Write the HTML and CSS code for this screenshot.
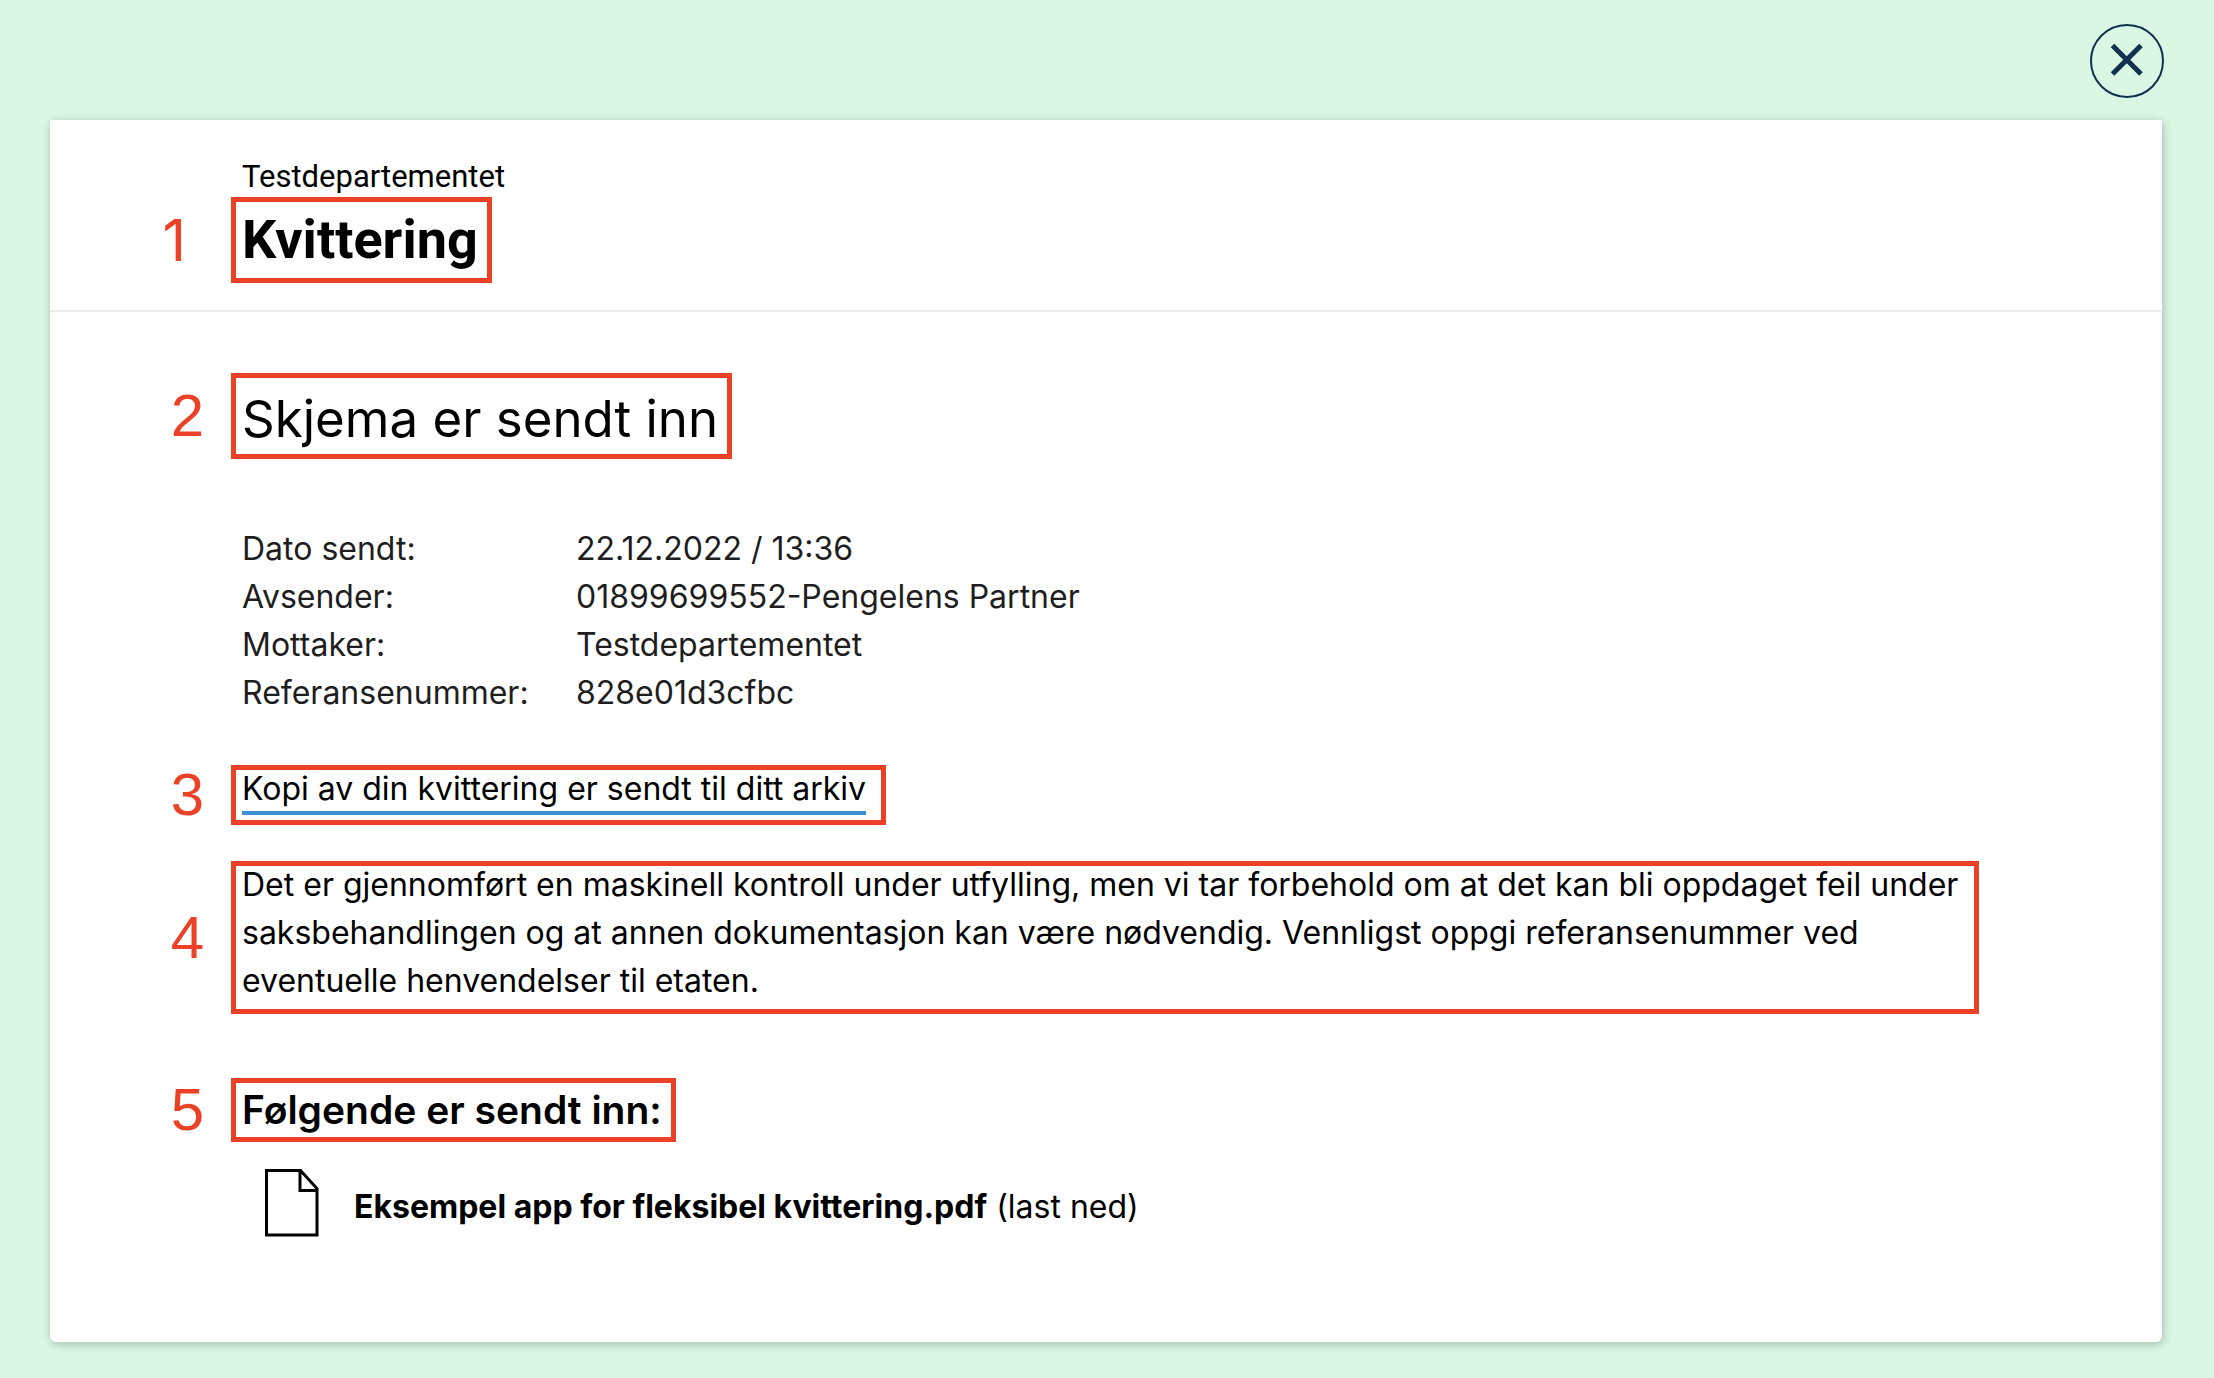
FILE: index.html
```html
<!DOCTYPE html>
<html lang="nb">
<head>
  <meta charset="utf-8">
  <meta name="viewport" content="width=device-width, initial-scale=1">
  <title>Kvittering</title>
  <link rel="stylesheet" href="styles.css">
</head>
<body>
  <div class="topbar">
    <button class="close" type="button" aria-label="Lukk">
      <svg class="close-icon" viewBox="0 0 34 34" aria-hidden="true"><path d="M2.500 1.500 31 30M31 1.500 2.500 30"/></svg>
    </button>
  </div>

  <main class="card">
    <header class="card-header">
      <p class="owner">Testdepartementet</p>
      <div class="marked">
        <span class="number number-one">1</span>
        <h1 class="title">Kvittering</h1>
      </div>
    </header>

    <div class="card-body">
      <div class="marked">
        <span class="number">2</span>
        <h2 class="heading">Skjema er sendt inn</h2>
      </div>

      <table class="details">
        <tbody>
          <tr><th scope="row">Dato sendt:</th><td>22.12.2022 / 13:36</td></tr>
          <tr><th scope="row">Avsender:</th><td>01899699552-Pengelens Partner</td></tr>
          <tr><th scope="row">Mottaker:</th><td>Testdepartementet</td></tr>
          <tr><th scope="row">Referansenummer:</th><td>828e01d3cfbc</td></tr>
        </tbody>
      </table>

      <div class="marked archive">
        <span class="number">3</span>
        <a class="archive-link" href="#arkiv">Kopi av din kvittering er sendt til ditt arkiv</a>
      </div>

      <div class="marked disclaimer">
        <span class="number">4</span>
        <p>Det er gjennomført en maskinell kontroll under utfylling, men vi tar forbehold om at det kan bli oppdaget feil under saksbehandlingen og at annen dokumentasjon kan være nødvendig. Vennligst oppgi referansenummer ved eventuelle henvendelser til etaten.</p>
      </div>

      <div class="marked">
        <span class="number">5</span>
        <h3 class="subheading">Følgende er sendt inn:</h3>
      </div>

      <a class="attachment" href="#last-ned">
        <svg class="file-icon" viewBox="0 0 54 68" aria-hidden="true"><path d="M1.500 1.500H35.500L52 19.500V66H1.500Z M35 1.500V21.500H52"/></svg>
        <span class="attachment-text"><strong>Eksempel app for fleksibel kvittering.pdf</strong> (last ned)</span>
      </a>
    </div>
  </main>
</body>
</html>
```
FILE: styles.css
```css
* {
  box-sizing: border-box;
}

body {
  margin: 0;
  padding: 0 52px 36px 50px;
  background: #daf7e4;
  color: #000;
  font-family: Inter, "Liberation Sans", sans-serif;
  font-size: 32px;
  line-height: 48px;
}

h1, h2, h3, p {
  margin: 0;
}

a {
  color: inherit;
  text-decoration: none;
}

.topbar {
  display: flex;
  justify-content: flex-end;
  padding: 24px 0 22px;
}

.close {
  display: flex;
  align-items: center;
  justify-content: center;
  width: 74px;
  height: 74px;
  margin-right: -2px;
  padding: 0;
  border: 2px solid #12304f;
  border-radius: 50%;
  background: none;
}

.close-icon {
  width: 34px;
  height: 34px;
  fill: none;
  stroke: #12304f;
  stroke-width: 5;
}

.card {
  background: #fff;
  border-radius: 2px 2px 6px 6px;
  box-shadow: 1px 2px 10px rgba(0, 0, 0, 0.25);
}

.card-header {
  padding: 37px 192px 27px;
  border-bottom: 2px solid #ededed;
  font-family: Roboto, "Liberation Sans", sans-serif;
}

.owner {
  font-size: 31px;
  line-height: 40px;
}

.title {
  font-size: 54px;
  font-weight: 700;
  line-height: 86px;
}

.card-body {
  display: flex;
  flex-direction: column;
  align-items: flex-start;
  padding: 61px 192px 105px;
}

.heading {
  padding-top: 6px;
  font-size: 51px;
  font-weight: 400;
  line-height: 80px;
}

.details {
  margin: 66px 0 48px;
  border-collapse: collapse;
  color: #1e1e1e;
}

.details th {
  min-width: 334px;
  width: 334px;
  padding: 0;
  font-weight: 400;
  text-align: left;
}

.details td {
  padding: 0;
}

.archive-link {
  padding-bottom: 3px;
  border-bottom: 4px solid #3e8ed5;
}

.subheading {
  font-size: 39px;
  font-weight: 600;
  line-height: 64px;
}

.attachment {
  display: flex;
  align-items: center;
  gap: 35px;
  margin: 27px 0 0 23px;
}

.file-icon {
  width: 54px;
  height: 68px;
  fill: none;
  stroke: #000;
  stroke-width: 3;
}

.attachment-text {
  padding-top: 8px;
}

.attachment-text strong {
  font-weight: 700;
}

/* Numbered red frames drawn over the text they point out */
.marked {
  --frame-right: -14px;
  --frame-bottom: 0px;
  position: relative;
  width: fit-content;
}

.marked::before {
  content: "";
  position: absolute;
  inset: 0 var(--frame-right) var(--frame-bottom) -11px;
  border: 5px solid #ec4126;
  pointer-events: none;
}

.archive {
  --frame-right: -20px;
  --frame-bottom: -12px;
  margin-bottom: 48px;
}

.disclaimer {
  --frame-right: -9px;
  --frame-bottom: -9px;
  margin-bottom: 73px;
}

.number {
  position: absolute;
  top: 0;
  right: 100%;
  bottom: var(--frame-bottom);
  display: flex;
  align-items: center;
  margin-right: 38px;
  color: #ec4126;
  font-family: "Liberation Sans", Arial, sans-serif;
  font-size: 60px;
}

/* Inter draws the digit one without a foot */
.number-one {
  margin-right: 56px;
  font-family: Inter, sans-serif;
  font-size: 58px;
}
```
